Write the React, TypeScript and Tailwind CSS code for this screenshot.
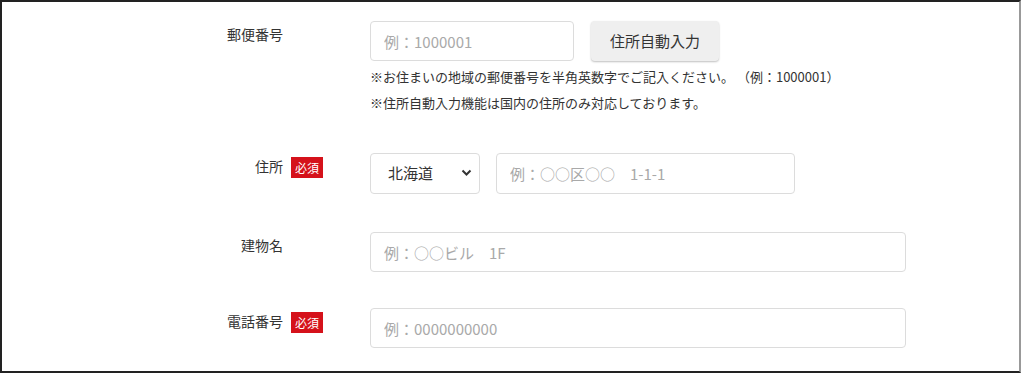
import React from "react";

const font = "font-['Noto_Sans_CJK_JP','Liberation_Sans',sans-serif]";

const inputCls =
  "h-[40px] rounded-[4px] border border-[#dcdcdc] bg-white px-[13px] text-[15px] text-[#333] outline-none placeholder:text-[#a9a9a9]";

const Required = () => (
  <span className="flex h-[21px] w-[32px] items-center justify-center bg-[#d5121b] text-[12px] leading-none text-white">
    必須
  </span>
);

const Row = ({
  label,
  required,
  className = "",
  children,
}: {
  label: string;
  required?: boolean;
  className?: string;
  children: React.ReactNode;
}) => (
  <div className={`flex ${className}`}>
    <div className="mt-[3px] flex h-[21px] w-[281px] items-center justify-end text-[14px] text-[#333]">
      {label}
    </div>
    <div className="ml-2 mt-[4px] w-[32px]">{required && <Required />}</div>
    <div className="ml-[47px]">{children}</div>
  </div>
);

export default function App() {
  return (
    <div
      className={`${font} h-[373px] w-[1021px] border-y-2 border-l-2 border-r-2 border-[#222] border-r-[#999] bg-white pt-[19px]`}
    >
      {/* 郵便番号 */}
      <Row label="郵便番号">
        <div className="flex">
          <input className={`${inputCls} w-[204px]`} placeholder="例：1000001" />
          <button className="ml-[17px] h-[40px] w-[128px] rounded-[4px] bg-[#efefef] text-[15px] text-[#333] shadow-[0_1px_2px_rgba(0,0,0,0.25)]">
            住所自動入力
          </button>
        </div>
        <div className="mt-[3px] text-[13px] leading-[26px] text-[#333]">
          <p>※お住まいの地域の郵便番号を半角英数字でご記入ください。 （例：1000001）</p>
          <p>※住所自動入力機能は国内の住所のみ対応しております。</p>
        </div>
      </Row>

      {/* 住所 */}
      <Row label="住所" required className="mt-[37px]">
        <div className="flex">
          <div className="relative">
            <select className="h-[41px] w-[110px] appearance-none rounded-[4px] border border-[#dcdcdc] bg-white pl-[17px] text-[15px] text-[#333] outline-none">
              <option>北海道</option>
              <option>青森県</option>
              <option>岩手県</option>
            </select>
            <svg
              className="pointer-events-none absolute right-[8px] top-[16px]"
              width="11"
              height="8"
              viewBox="0 0 11 8"
              fill="none"
            >
              <path d="M1.5 1.5 L5.5 5.5 L9.5 1.5" stroke="#333" strokeWidth="2" />
            </svg>
          </div>
          <input
            className={`${inputCls} ml-[16px] h-[41px] w-[299px]`}
            placeholder="例：○○区○○　1-1-1"
          />
        </div>
      </Row>

      {/* 建物名 */}
      <Row label="建物名" className="mt-[38px]">
        <input className={`${inputCls} w-[536px]`} placeholder="例：○○ビル　1F" />
      </Row>

      {/* 電話番号 */}
      <Row label="電話番号" required className="mt-[36px]">
        <input className={`${inputCls} w-[536px]`} placeholder="例：0000000000" />
      </Row>
    </div>
  );
}
